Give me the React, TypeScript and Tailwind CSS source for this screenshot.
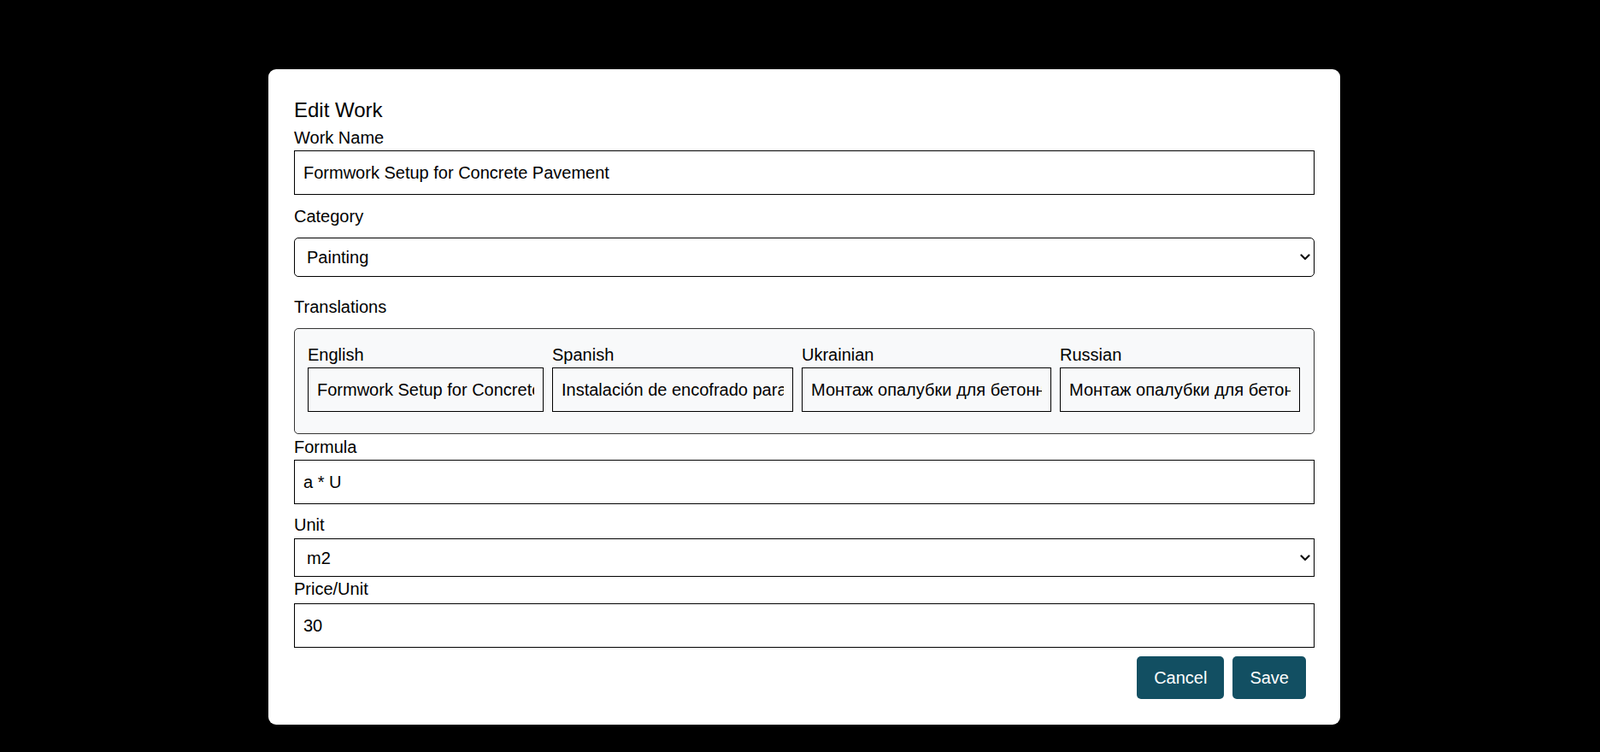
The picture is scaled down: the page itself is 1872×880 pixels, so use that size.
import React from "react";

type Translation = { lang: string; value: string; width: string };

const TRANSLATIONS: Translation[] = [
  { lang: "English", value: "Formwork Setup for Concrete Pavement", width: "w-[276px]" },
  { lang: "Spanish", value: "Instalación de encofrado para pavimento de concreto", width: "w-[282px]" },
  { lang: "Ukrainian", value: "Монтаж опалубки для бетонного покриття", width: "w-[292px]" },
  { lang: "Russian", value: "Монтаж опалубки для бетонного покрытия", width: "w-[281px]" },
];

const inputCls =
  "block w-full h-[52px] border border-black bg-white px-[10px] text-[20px] text-black outline-none";

const Chevron = () => (
  <svg
    className="pointer-events-none absolute right-[5px] top-1/2 -translate-y-1/2"
    width="12"
    height="8"
    viewBox="0 0 12 8"
    fill="none"
  >
    <path d="M1.5 1.5 L6 6 L10.5 1.5" stroke="#111" strokeWidth="2.2" strokeLinecap="round" strokeLinejoin="round" />
  </svg>
);

export default function App() {
  return (
    <div className="min-h-[880px] w-full bg-black font-['Liberation_Sans',Arial,sans-serif] text-black">
      <div className="flex justify-center pl-[10px] pt-[81px]">
        <div className="w-[1254px] rounded-[9px] bg-white px-[30px] pt-[34px] pb-[30px]">
          <h2 className="text-[24px] leading-[28px] font-normal">Edit Work</h2>

          <label className="mt-[7px] block text-[20px] leading-[23px]">Work Name</label>
          <input className={`mt-[3px] ${inputCls}`} defaultValue="Formwork Setup for Concrete Pavement" />

          <label className="mt-[14px] block text-[20px] leading-[23px]">Category</label>
          <div className="relative mt-[13px]">
            <select
              className="block h-[46px] w-full appearance-none rounded-[5px] border border-black bg-white px-[14px] text-[20px] text-black"
              defaultValue="Painting"
            >
              <option>Concrete</option>
              <option>Painting</option>
              <option>Formwork</option>
            </select>
            <Chevron />
          </div>

          <div className="mt-[24px] text-[20px] leading-[23px]">Translations</div>
          <div className="mt-[13px] h-[124px] rounded-[5px] border border-[#333] bg-[#f8f9fa] px-[15px] pt-[19px]">
            <div className="flex gap-[10px]">
              {TRANSLATIONS.map((t) => (
                <div key={t.lang} className={`${t.width} flex-none`}>
                  <label className="block text-[20px] leading-[23px]">{t.lang}</label>
                  <input
                    className="mt-[3px] block h-[52px] w-full border border-black bg-transparent px-[10px] text-[20px] text-black outline-none"
                    defaultValue={t.value}
                  />
                </div>
              ))}
            </div>
          </div>

          <label className="mt-[4px] block text-[20px] leading-[23px]">Formula</label>
          <input className={`mt-[3px] ${inputCls}`} defaultValue="a * U" />

          <label className="mt-[13px] block text-[20px] leading-[23px]">Unit</label>
          <div className="relative mt-[4px]">
            <select
              className="block h-[45px] w-full appearance-none border border-black bg-white px-[14px] text-[20px] text-black"
              defaultValue="m2"
            >
              <option>m</option>
              <option>m2</option>
              <option>m3</option>
            </select>
            <Chevron />
          </div>

          <label className="mt-[3px] block text-[20px] leading-[23px]">Price/Unit</label>
          <input className={`mt-[5px] h-[51px] ${inputCls}`} defaultValue="30" />

          <div className="mt-[10px] flex justify-end gap-[10px] pr-[10px]">
            <button className="h-[50px] rounded-[5px] bg-[#124f62] px-[20px] text-[20px] text-white">Cancel</button>
            <button className="h-[50px] rounded-[5px] bg-[#124f62] px-[20px] text-[20px] text-white">Save</button>
          </div>
        </div>
      </div>
    </div>
  );
}
